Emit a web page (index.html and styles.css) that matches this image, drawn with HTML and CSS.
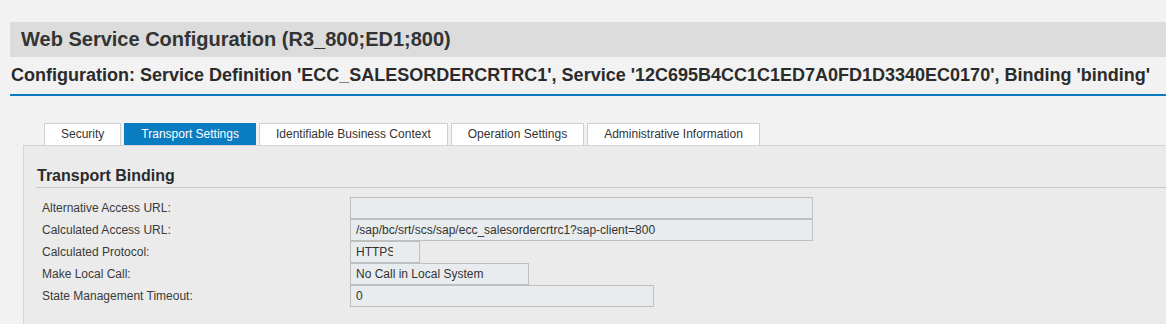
FILE: index.html
```html
<!DOCTYPE html>
<html>
<head>
    <meta charset="UTF-8">
    <title>Web Service Configuration</title>
    <link rel="stylesheet" href="styles.css">
</head>
<body>
    <div class="page">
        <div class="title-bar">Web Service Configuration (R3_800;ED1;800)</div>
        <div class="config-line">Configuration: Service Definition 'ECC_SALESORDERCRTRC1', Service '12C695B4CC1C1ED7A0FD1D3340EC0170', Binding 'binding'</div>

        <div class="tabs">
            <span class="tab">Security</span>
            <span class="tab on">Transport Settings</span>
            <span class="tab">Identifiable Business Context</span>
            <span class="tab">Operation Settings</span>
            <span class="tab">Administrative Information</span>
        </div>

        <div class="panel">
            <h2 class="section-title">Transport Binding</h2>
            <div class="form">
                <div class="row">
                    <label>Alternative Access URL:</label>
                    <div class="field wide"></div>
                </div>
                <div class="row">
                    <label>Calculated Access URL:</label>
                    <div class="field wide">/sap/bc/srt/scs/sap/ecc_salesordercrtrc1?sap-client=800</div>
                </div>
                <div class="row">
                    <label>Calculated Protocol:</label>
                    <div class="field tiny"><span class="clip">HTTPS</span></div>
                </div>
                <div class="row">
                    <label>Make Local Call:</label>
                    <div class="field small">No Call in Local System</div>
                </div>
                <div class="row">
                    <label>State Management Timeout:</label>
                    <div class="field medium">0</div>
                </div>
            </div>
        </div>
    </div>
</body>
</html>
```

FILE: styles.css
```css
* {
    margin: 0;
    padding: 0;
    box-sizing: border-box;
}
body {
    background-color: #f2f2f2;
    font-family: "Liberation Sans", Arial, sans-serif;
    color: #333;
}
.page {
    padding: 22px 0 0 10px;
}
.title-bar {
    height: 35px;
    line-height: 35px;
    padding-left: 11px;
    background-color: #dcdcdc;
    font-size: 20px;
    font-weight: bold;
    color: #333;
}
.config-line {
    padding: 8px 0 9px 1px;
    line-height: 20px;
    font-size: 18px;
    font-weight: bold;
    color: #2b2b2b;
    border-bottom: 2px solid #0a7ac2;
    white-space: nowrap;
}
.tabs {
    display: flex;
    gap: 3px;
    margin: 27px 0 0 34px;
}
.tab {
    height: 22px;
    line-height: 21px;
    padding: 0 16px;
    background-color: #fff;
    border: 1px solid #cfcfcf;
    border-bottom: none;
    font-size: 12px;
    color: #333;
}
.tab.on {
    background-color: #0a7cc2;
    border-color: #0a7cc2;
    color: #fff;
}
.panel {
    margin-left: 13px;
    height: 180px;
    background-color: #ebebeb;
    border-top: 1px solid #d3d3d3;
    border-left: 1px solid #d6d6d6;
}
.section-title {
    margin: 20px 0 0 12px;
    padding: 0 0 1px 1px;
    line-height: 20px;
    font-size: 16px;
    font-weight: bold;
    color: #2b2b2b;
    border-bottom: 1px solid #c8c8c8;
}
.form {
    padding: 9px 0 0 18px;
}
.row {
    display: flex;
    align-items: center;
    height: 22px;
}
.row label {
    width: 308px;
    font-size: 12px;
    color: #3a3a3a;
}
.field {
    height: 22px;
    line-height: 20px;
    padding-left: 5px;
    background-color: #e8ecef;
    border: 1px solid #bfbfbf;
    font-size: 12px;
    color: #333;
    white-space: nowrap;
    overflow: hidden;
}
.field.wide {
    width: 463px;
}
.field.tiny {
    width: 70px;
}
.field.small {
    width: 179px;
}
.field.medium {
    width: 304px;
}
.clip {
    display: block;
    width: 37px;
    overflow: hidden;
}
```
